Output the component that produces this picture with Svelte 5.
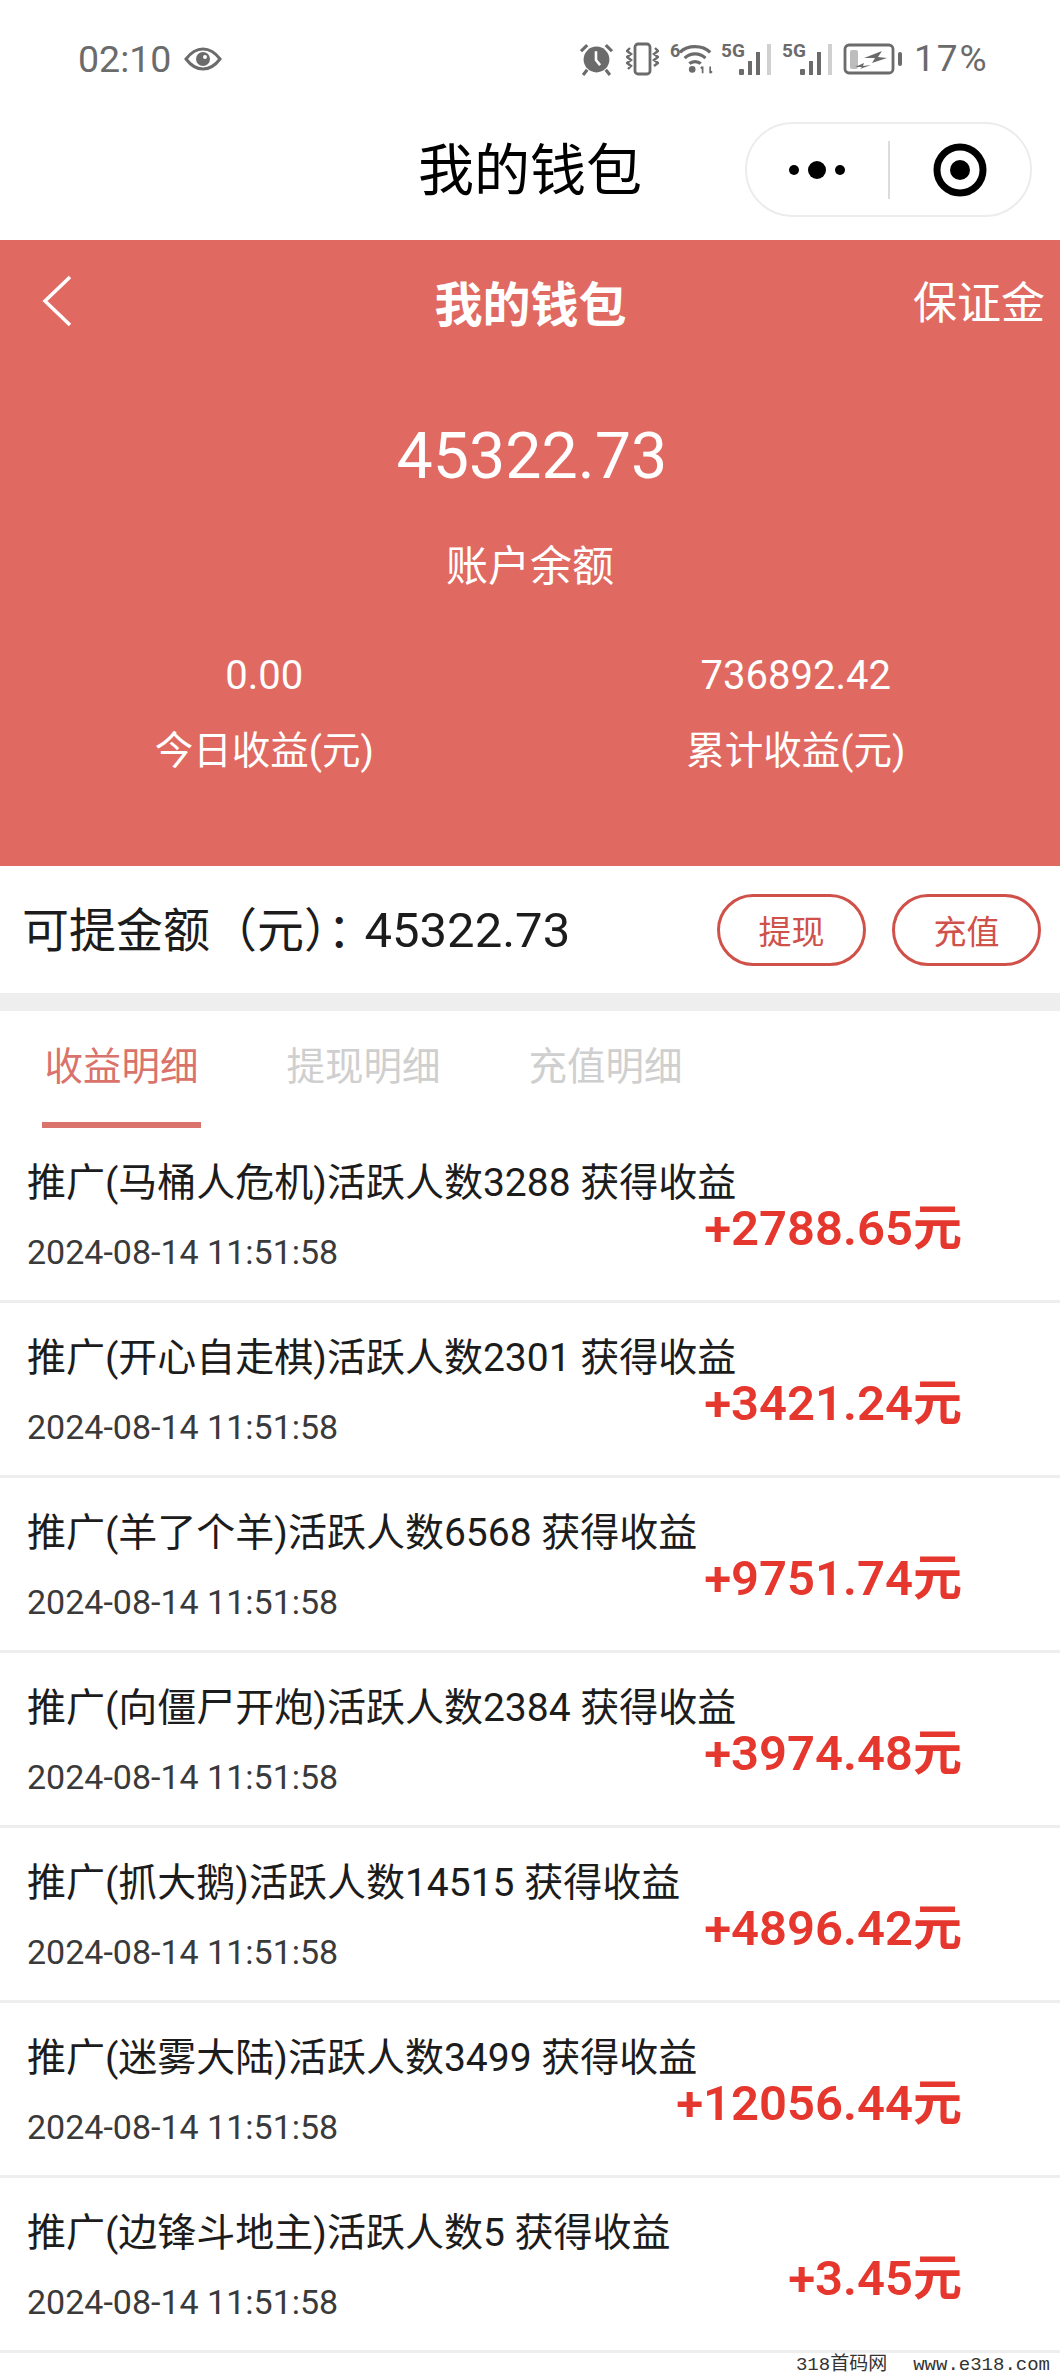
<script>
  const rows = [
    ['推广(马桶人危机)活跃人数3288 获得收益', '+2788.65元'],
    ['推广(开心自走棋)活跃人数2301 获得收益', '+3421.24元'],
    ['推广(羊了个羊)活跃人数6568 获得收益', '+9751.74元'],
    ['推广(向僵尸开炮)活跃人数2384 获得收益', '+3974.48元'],
    ['推广(抓大鹅)活跃人数14515 获得收益', '+4896.42元'],
    ['推广(迷雾大陆)活跃人数3499 获得收益', '+12056.44元'],
    ['推广(边锋斗地主)活跃人数5 获得收益', '+3.45元']
  ];
</script>

<div class="page">
  <div class="status">
    <div class="left">
      <span class="time">02:10</span>
      <svg class="eye" width="38" height="26" viewBox="0 0 38 26"><path d="M2 13C8 5 13 3 19 3s11 2 17 10c-6 8-11 10-17 10S8 21 2 13Z" fill="none" stroke="#6b6b6b" stroke-width="3"/><circle cx="19" cy="13" r="7" fill="#6b6b6b"/><circle cx="21" cy="11" r="2" fill="#fff"/></svg>
    </div>
    <div class="right">
      <svg width="33" height="33" viewBox="0 0 32 32"><circle cx="16" cy="16" r="12.500" fill="#6b6b6b"/><path d="M15.500 8v8.500l4 5" fill="none" stroke="#fff" stroke-width="2.500"/><path d="M1 8 7 2M31 8 25 2M7 26l-4 5M25 26l4 5" stroke="#6b6b6b" stroke-width="3"/></svg>
      <svg class="vib" width="33" height="34" viewBox="2 0 33 34"><rect x="11" y="2" width="15" height="30" rx="3" fill="none" stroke="#6b6b6b" stroke-width="2.800"/><path d="M6 6 3 9l4 3-4 3 4 3-4 3 4 3-3 3M31 6l3 3-4 3 4 3-4 3 4 3-4 3" fill="none" stroke="#6b6b6b" stroke-width="2.400"/></svg>
      <div class="wifi">
        <span class="tiny six">6</span>
        <svg width="34" height="32" viewBox="0 0 36 32"><path d="M1 9C9 1 25 1 33 9M6 15C12 9 22 9 28 15M11 21C14 18 20 18 23 21" fill="none" stroke="#6b6b6b" stroke-width="3.400"/><circle cx="14" cy="27" r="3.500" fill="#6b6b6b"/><path d="M25 24v7M23 26l2-2M33 24v7M35 29l-2 2" fill="none" stroke="#6b6b6b" stroke-width="1.800"/></svg>
      </div>
      <div class="sig first">
        <span class="tiny">5G</span>
        <svg width="32" height="32" viewBox="0 0 32 32"><rect x="0" y="26" width="5" height="6" rx="1" fill="#6b6b6b"/><rect x="9" y="18" width="4" height="14" fill="#6b6b6b"/><rect x="17" y="9" width="4" height="23" fill="#6b6b6b"/><rect x="28" y="1" width="4" height="31" fill="#d0d0d0"/></svg>
      </div>
      <div class="sig">
        <span class="tiny">5G</span>
        <svg width="32" height="32" viewBox="0 0 32 32"><rect x="0" y="26" width="5" height="6" rx="1" fill="#6b6b6b"/><rect x="9" y="18" width="4" height="14" fill="#6b6b6b"/><rect x="17" y="9" width="4" height="23" fill="#6b6b6b"/><rect x="28" y="1" width="4" height="31" fill="#d0d0d0"/></svg>
      </div>
      <svg width="60" height="34" viewBox="0 0 60 34"><rect x="2" y="3" width="48" height="28" rx="4" fill="none" stroke="#6b6b6b" stroke-width="2.800"/><rect x="7" y="8" width="8" height="19" rx="2" fill="#bdbdbd"/><rect x="55" y="10" width="4" height="14" rx="2" fill="#6b6b6b"/><path d="M21 16 39 9l-4 6 9 1-15 5 3-5ZM12 25l9-4-1 3 8-1-11 4 2-2Z" fill="#6b6b6b"/></svg>
      <span class="pct">17%</span>
    </div>
  </div>

  <div class="nav">
    <h1>我的钱包</h1>
    <div class="capsule">
      <div class="cap-cell">
        <svg width="64" height="20" viewBox="0 0 64 20"><circle cx="9" cy="10" r="5" fill="#000"/><circle cx="32" cy="10" r="9" fill="#000"/><circle cx="55" cy="10" r="5" fill="#000"/></svg>
      </div>
      <div class="cap-div"></div>
      <div class="cap-cell">
        <svg width="54" height="54" viewBox="0 0 54 54"><circle cx="27" cy="27" r="23" fill="none" stroke="#000" stroke-width="7"/><circle cx="27" cy="27" r="10" fill="#000"/></svg>
      </div>
    </div>
  </div>

  <section class="hero">
    <div class="hero-top">
      <svg class="back" width="32" height="52" viewBox="0 0 32 52"><path d="M29 2 4 26l25 24" fill="none" stroke="#fff" stroke-width="3.500"/></svg>
      <div class="hero-title">我的钱包</div>
      <div class="deposit">保证金</div>
    </div>
    <div class="balance">45322.73</div>
    <div class="balance-label">账户余额</div>
    <div class="stats">
      <div class="stat"><div class="stat-val">0.00</div><div class="stat-label">今日收益(元)</div></div>
      <div class="stat"><div class="stat-val">736892.42</div><div class="stat-label">累计收益(元)</div></div>
    </div>
  </section>

  <div class="withdraw">
    <div class="wd-text">可提金额（元）：<span class="wd-num">45322.73</span></div>
    <div class="wd-btns">
      <div class="btn">提现</div>
      <div class="btn">充值</div>
    </div>
  </div>

  <div class="tabs">
    <div class="tab active">收益明细</div>
    <div class="tab">提现明细</div>
    <div class="tab">充值明细</div>
  </div>

  <div class="list">
    {#each rows as r}
      <div class="row">
        <div class="row-main">
          <div class="row-title">{r[0]}</div>
          <div class="row-date">2024-08-14 11:51:58</div>
        </div>
        <div class="row-amt">{r[1]}</div>
      </div>
    {/each}
  </div>
  <div class="mark"><span>318首码网</span><span>www.e318.com</span></div>
</div>

<style>
  :global(body) { margin: 0; background: #fff; }
  .page { width: 1060px; height: 2376px; overflow: hidden; background: #fff; font-family: Roboto, "Noto Sans CJK SC", sans-serif; color: #1c1c1c; }

  .status { height: 120px; box-sizing: border-box; padding: 40px 75px 0 78px; display: flex; justify-content: space-between; align-items: flex-start; color: #6b6b6b; }
  .left { display: flex; align-items: center; gap: 13px; }
  .time { font-size: 37.500px; line-height: 38px; }
  .right { display: flex; align-items: center; gap: 11px; }
  .right > svg { display: block; flex: none; }
  .vib { margin-left: 2px; }
  .tiny { width: 18px; font-size: 19px; font-weight: 700; line-height: 16px; align-self: flex-start; color: #6b6b6b; font-family: "Liberation Sans Narrow", Roboto, sans-serif; }
  .six { width: 9px; font-size: 18px; }
  .wifi, .sig { display: flex; align-items: flex-end; }
  .wifi svg, .sig svg { display: block; flex: none; }
  .first { margin-left: -3px; }
  .pct { width: 71px; flex: none; text-align: right; white-space: nowrap; font-size: 37px; line-height: 38px; letter-spacing: 2px; }

  .nav { height: 120px; box-sizing: border-box; padding-bottom: 29px; position: relative; display: flex; align-items: center; justify-content: center; }
  h1 { margin: 0; font-size: 56px; font-weight: 400; color: #000; }
  .capsule { position: absolute; left: 745px; top: 2px; width: 287px; height: 95px; box-sizing: border-box; border: 2px solid #ececec; border-radius: 48px; display: flex; align-items: center; }
  .cap-cell { flex: 1; display: flex; justify-content: center; }
  .cap-div { width: 2px; height: 58px; background: #dcdcdc; }
  .cap-cell svg { display: block; }

  .hero { height: 626px; background: #e06a62; color: #fff; display: flex; flex-direction: column; align-items: center; }
  .hero-top { width: 100%; height: 116px; box-sizing: border-box; padding: 0 15px 0 41px; display: flex; align-items: center; justify-content: space-between; position: relative; }
  .back { display: block; margin-top: 6px; }
  .hero-title { position: absolute; left: 1px; right: 0; top: 34px; text-align: center; font-size: 48px; font-weight: 700; line-height: 64px; }
  .deposit { font-size: 44px; line-height: 60px; margin-top: 12px; }
  .balance { font-size: 64.500px; line-height: 76px; margin-top: 62px; padding-left: 4px; }
  .balance-label { font-size: 42px; line-height: 56px; margin-top: 45px; }
  .stats { width: 100%; display: flex; margin-top: 56px; }
  .stat { flex: 1; text-align: center; }
  .stat:last-child { padding-left: 3px; }
  .stat-val { font-size: 40px; line-height: 50px; }
  .stat-label { font-size: 38.500px; line-height: 56px; margin-top: 22px; }

  .withdraw { height: 127px; border-bottom: 18px solid #eeeeee; display: flex; align-items: center; justify-content: space-between; padding: 0 19px 0 22px; }
  .wd-text { font-size: 47px; color: #1c1c1c; margin-top: -6px; white-space: nowrap; }
  .wd-num { font-size: 49px; margin-left: -10px; }
  .wd-btns { display: flex; gap: 26px; }
  .btn { width: 149px; height: 72px; box-sizing: border-box; border: 3px solid #d0504a; border-radius: 36px; color: #d0504a; font-size: 33px; display: flex; align-items: center; justify-content: center; }

  .tabs { height: 117px; box-sizing: border-box; display: flex; padding-left: 42px; }
  .tab { width: 159px; height: 117px; box-sizing: border-box; border-bottom: 6px solid transparent; font-size: 38.500px; line-height: 112px; color: #cfcfcf; text-align: center; margin-right: 83px; }
  .tab.active { color: #d9736b; border-bottom-color: #d9736b; }

  .row { height: 175px; box-sizing: border-box; border-bottom: 3px solid #eeeeee; padding: 30px 98px 0 27px; display: flex; justify-content: space-between; }
  .row-main { flex: 1; min-width: 0; white-space: nowrap; }
  .row-title { font-size: 39px; line-height: 50px; color: #1c1c1c; }
  .row-date { font-size: 34px; line-height: 40px; margin-top: 24px; color: #3a3a3a; }
  .row-amt { font-size: 49px; font-weight: 600; line-height: 60px; color: #e5372d; margin-top: 41px; white-space: nowrap; }
  .mark { display: flex; justify-content: flex-end; gap: 26px; height: 23px; box-sizing: border-box; padding: 1px 10px 0 0; font-family: "Liberation Mono", "Noto Sans CJK SC", monospace; font-size: 19px; line-height: 22px; color: #333; }
</style>
